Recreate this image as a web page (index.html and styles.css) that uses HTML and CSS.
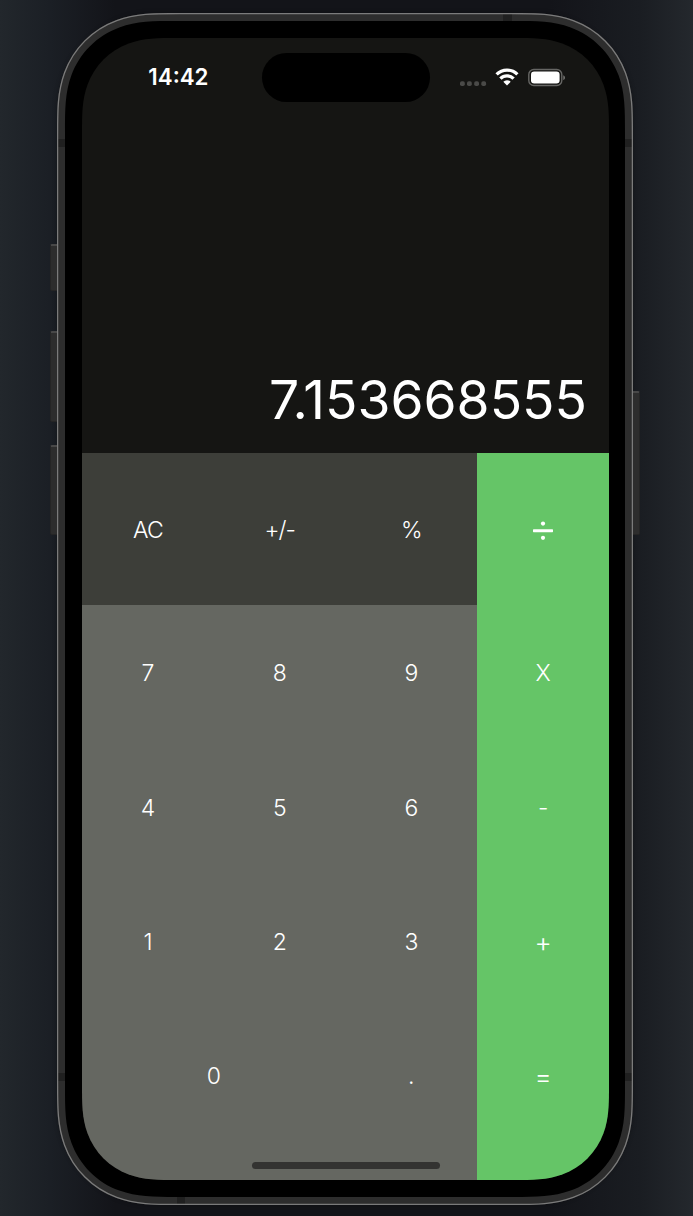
FILE: index.html
```html
<!DOCTYPE html>
<html lang="en">
<head>
<meta charset="utf-8">
<title>Calculator</title>
<link rel="stylesheet" href="styles.css">
</head>
<body>
<main class="phone">
  <span class="side side-mute"></span>
  <span class="side side-up"></span>
  <span class="side side-down"></span>
  <span class="side side-power"></span>
  <svg class="frame" width="576" height="1192" viewBox="0 0 576 1192">
    <path fill="#2d2d2d" d="M121.9 0H454.1c26 0 43.3 0 62.6 7c24.3 8.9 43.5 28 52.3 52.3c7 19.3 7 36.6 7 62.6V1070.1c0 26 0 43.3-7 62.6c-8.9 24.3-28 43.5-52.3 52.3c-19.3 7-36.6 7-62.6 7H121.9c-26 0-43.3 0-62.6-7c-24.3-8.9-43.5-28-52.3-52.3c-7-19.3-7-36.6-7-62.6V121.9c0-26 0-43.3 7-62.6c8.9-24.3 28-43.5 52.3-52.3c19.3-7 36.6-7 62.6-7z"/>
    <path fill="#202020" d="M0 126h9v8H0zM567 126h9v8h-9zM0 1060h9v8H0zM567 1060h9v8h-9zM446 0h9v9h-9zM120 1183h8v9h-8z"/>
    <path fill="none" stroke="#7b7b7b" stroke-width="1.3" transform="translate(.6 .6) scale(.9979 .999)" d="M121.9 0H454.1c26 0 43.3 0 62.6 7c24.3 8.9 43.5 28 52.3 52.3c7 19.3 7 36.6 7 62.6V1070.1c0 26 0 43.3-7 62.6c-8.9 24.3-28 43.5-52.3 52.3c-19.3 7-36.6 7-62.6 7H121.9c-26 0-43.3 0-62.6-7c-24.3-8.9-43.5-28-52.3-52.3c-7-19.3-7-36.6-7-62.6V121.9c0-26 0-43.3 7-62.6c8.9-24.3 28-43.5 52.3-52.3c19.3-7 36.6-7 62.6-7z"/>
    <path fill="#000" transform="translate(8 8)" d="M111.5 0H448.5c23.5 0 39.5 0 57.2 6.4c22.2 8.1 39.8 25.6 47.9 47.9c6.4 17.7 6.4 33.7 6.4 57.2V1064.5c0 23.5 0 39.5-6.4 57.2c-8.1 22.2-25.6 39.8-47.9 47.9c-17.7 6.4-33.7 6.4-57.2 6.4H111.5c-23.5 0-39.5 0-57.2-6.4c-22.2-8.1-39.8-25.6-47.9-47.9c-6.4-17.7-6.4-33.7-6.4-57.2V111.5c0-23.5 0-39.5 6.4-57.2c8.1-22.2 25.6-39.8 47.9-47.9c17.7-6.4 33.7-6.4 57.2-6.4z"/>
  </svg>
  <section class="screen">
    <header class="status">
      <time class="clock">14:42</time>
      <div class="island"></div>
      <svg class="indicators" width="108" height="20" viewBox="0 0 108 20">
        <g fill="#4a4a48"><rect x="1" y="13.2" width="4.8" height="4.8" rx="1.8"/><rect x="8" y="13.2" width="4.8" height="4.8" rx="1.8"/><rect x="15.2" y="13.2" width="4.8" height="4.8" rx="1.8"/><rect x="22.3" y="13.2" width="4.8" height="4.8" rx="1.8"/></g>
        <g fill="none" stroke="#fff" stroke-width="3.3"><path d="M37.6 6.4a14.6 14.6 0 0 1 20.8 0"/><path d="M41.4 10.6a9.3 9.3 0 0 1 13.2 0"/></g>
        <path fill="#fff" d="M44.3 13.7a5.2 5.2 0 0 1 7.4 0L48 17.6z"/>
        <rect x="69.8" y="1.5" width="33" height="16" rx="5" fill="none" stroke="#666664" stroke-width="1.4"/>
        <rect x="72" y="3.6" width="28.6" height="11.8" rx="3.2" fill="#fff"/>
        <path fill="#777775" d="M104.3 7.3c2.2.8 2.2 4 0 4.8z"/>
      </svg>
    </header>
    <output class="display">7.153668555</output>
    <div class="keypad">
      <div class="row top">
        <button class="key dark">AC</button><button class="key dark sign">+/-</button><button class="key dark">%</button>
        <button class="key op" aria-label="Divide"><svg class="divide" width="20" height="20" viewBox="0 0 20 20" fill="#fff"><circle cx="10" cy="2.6" r="2.1"/><rect y="8.3" width="20" height="2.9" rx=".6"/><circle cx="10" cy="16.8" r="2.1"/></svg></button>
      </div>
      <div class="row"><button class="key">7</button><button class="key">8</button><button class="key">9</button><button class="key op">X</button></div>
      <div class="row"><button class="key">4</button><button class="key">5</button><button class="key">6</button><button class="key op">-</button></div>
      <div class="row"><button class="key">1</button><button class="key">2</button><button class="key">3</button><button class="key op math">+</button></div>
      <div class="row last"><button class="key wide">0</button><button class="key">.</button><button class="key op math">=</button></div>
    </div>
    <span class="home"></span>
  </section>
</main>
</body>
</html>
```
FILE: styles.css
```css
* { box-sizing: border-box; }
body {
  margin: 0;
  height: 1216px;
  overflow: hidden;
  padding: 13px 0 0 57px;
  background: linear-gradient(90deg, #22272c 0, #1b1f25 50px, #131419 115px, #131419 550px, #1a1d22 640px, #24282d 693px);
  font-family: Inter, "Liberation Sans", sans-serif;
  color: #fff;
}
.phone {
  position: relative;
  width: 576px;
  height: 1192px;
  padding: 25px 24px 25px 25px;
  border-radius: 98px;
  box-shadow: 0 0 5px rgba(0, 0, 0, .3);
}
.frame { position: absolute; left: 0; top: 0; }
.side {
  position: absolute;
  left: -7px;
  width: 8px;
  background: #2d2d2d;
  border: 1px solid #252525;
  border-top: 2px solid #484848;
  border-radius: 2px 0 0 2px;
}
.side-mute { top: 231px; height: 47px; }
.side-up { top: 318px; height: 91px; }
.side-down { top: 432px; height: 90px; }
.side-power { left: 575px; top: 378px; height: 144px; border-radius: 0 2px 2px 0; }
.screen {
  position: relative;
  width: 527px;
  height: 1142px;
  display: flex;
  flex-direction: column;
  background: #151513;
  clip-path: path("M96 0H431c20.5 0 34 0 49.3 5.5c19.1 7 34.2 22 41.2 41.2c5.5 15.3 5.5 28.8 5.5 49.3V1046c0 20.5 0 34-5.5 49.3c-7 19.1-22 34.2-41.2 41.2c-15.3 5.5-28.8 5.5-49.3 5.5H96c-20.5 0-34 0-49.3-5.5c-19.1-7-34.2-22-41.2-41.2c-5.5-15.3-5.5-28.8-5.5-49.3V96c0-20.5 0-34 5.5-49.3c7-19.1 22-34.2 41.2-41.2c15.3-5.5 28.8-5.5 49.3-5.5z");
}
.status {
  display: grid;
  grid-template-columns: 179.5px 168px 1fr;
  align-items: center;
  height: 79px;
}
.clock {
  justify-self: end;
  margin: -1px 53px 0 0;
  font-size: 22.3px;
  font-weight: 600;
  line-height: 28px;
}
.island { height: 49px; border-radius: 25px; background: #000; }
.indicators { margin: 0 0 0 29.5px; }
.display {
  flex: 1;
  display: flex;
  align-items: flex-end;
  justify-content: flex-end;
  padding: 0 22px 20px 0;
  font-size: 53.4px;
  line-height: 66px;
}
.keypad { flex: none; height: 727.5px; }
.row { display: grid; grid-template-columns: 132px 131.5px 131.7px 1fr; height: 134.5px; }
.row.top { height: 152.5px; }
.row.last { grid-template-columns: 263.5px 131.7px 1fr; height: 171.5px; }
.key {
  margin: 0;
  padding: 2px 0 0;
  border: 0;
  background: #656761;
  color: #fff;
  font: 350 23px/28px Inter, "Liberation Sans", sans-serif;
}
.row.last .key { padding-bottom: 38px; }
.dark { background: #3d3e39; letter-spacing: -.7px; }
.sign { letter-spacing: -.9px; }
.op { background: #65c567; }
.key.math { font-size: 26.5px; }
.divide { display: block; margin: 3px auto 0; }
.home {
  position: absolute;
  left: 170px;
  bottom: 11px;
  width: 187.5px;
  height: 7px;
  border-radius: 4px;
  background: #333331;
}
```
